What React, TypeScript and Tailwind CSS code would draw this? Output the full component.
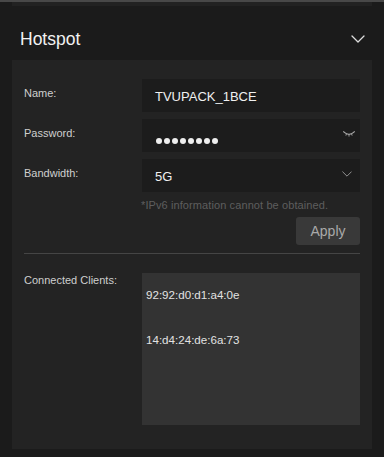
import React from 'react';

const font = { fontFamily: '"Liberation Sans", Arial, Helvetica, sans-serif' };

function Chevron({ className }: { className?: string }) {
  return (
    <svg viewBox="0 0 14 8" fill="none" className={className}>
      <path d="M1 1l6 6 6-6" stroke="currentColor" strokeWidth="1.3" strokeLinecap="round" strokeLinejoin="round" />
    </svg>
  );
}

function ClosedEye() {
  return (
    <svg viewBox="0 0 12 6" fill="none" className="h-[6px] w-[12px] text-[#a8a8a8]">
      <path d="M1 1.2Q6 5.5 11 1.2" stroke="currentColor" strokeWidth="1.1" strokeLinecap="round" />
      <path d="M1.2 1.2L0.6 0.4M3.4 3L3 4.2M6 3.9V5.2M8.6 3L9 4.2M10.8 1.2L11.4 0.4" stroke="currentColor" strokeWidth="0.9" strokeLinecap="round" />
    </svg>
  );
}

function Label({ children }: { children: React.ReactNode }) {
  return <div className="pt-[7px] text-[11px] leading-[14px] text-[#cfcfcf]">{children}</div>;
}

export default function App() {
  const clients = ['92:92:d0:d1:a4:0e', '14:d4:24:de:6a:73'];

  return (
    <div className="h-[457px] w-[384px] overflow-hidden bg-[#1b1b1b]" style={font}>
      <div className="h-[2px] bg-[#484848]" />
      <div className="mx-3 h-[4px] bg-[#222222]" />

      <div className="flex items-center justify-between pb-[11px] pl-5 pr-[19px] pt-[23px]">
        <h2 className="text-[17.5px] font-medium leading-[20px] text-[#f2f2f2]">Hotspot</h2>
        <Chevron className="h-[8px] w-[14px] text-[#dddddd]" />
      </div>

      <div className="mx-3 h-[389px] bg-[#232323] px-3 pt-[19px]">
        <div className="grid grid-cols-[118px_1fr] gap-y-[7px]">
          <Label>Name:</Label>
          <div className="flex h-[33px] items-center bg-[#1c1c1c] pl-[13px] pt-[2px] text-[13px] text-[#f0f0f0]">
            TVUPACK_1BCE
          </div>

          <Label>Password:</Label>
          <div className="flex h-[33px] items-center justify-between bg-[#1c1c1c] pl-[14px] pr-[5px]">
            <div className="mt-[10px] flex gap-[2px]">
              {Array.from({ length: 8 }).map((_, i) => (
                <span key={i} className="h-[6px] w-[6px] rounded-full bg-[#eeeeee]" />
              ))}
            </div>
            <div className="-mt-[4px]">
              <ClosedEye />
            </div>
          </div>

          <Label>Bandwidth:</Label>
          <div className="flex h-[33px] items-center justify-between bg-[#1c1c1c] pl-[13px] pr-[8px] pt-[2px] text-[13px] text-[#f0f0f0]">
            <span>5G</span>
            <Chevron className="-mt-[6px] h-[6px] w-[10px] text-[#9a9a9a]" />
          </div>
        </div>

        <div className="ml-[117px] mt-[6px] text-[11px] leading-[14px] tracking-[0.1px] text-[#5e5e5e]">
          *IPv6 information cannot be obtained.
        </div>

        <div className="mt-[5px] flex justify-end">
          <button className="h-[28px] w-[64px] rounded-[3px] bg-[#393939] text-[14px] text-[#a9a9a9]">Apply</button>
        </div>

        <div className="mt-[8px] h-px bg-[#454545]" />

        <div className="mt-[19px] grid grid-cols-[118px_1fr]">
          <div className="text-[11px] leading-[14px] text-[#cfcfcf]">Connected Clients:</div>
          <div className="flex h-[152px] flex-col gap-[29px] bg-[#333333] pl-[4px] pt-[14px] text-[11.6px] leading-[16px] text-[#e2e2e2]">
            {clients.map((c) => (
              <div key={c}>{c}</div>
            ))}
          </div>
        </div>
      </div>
    </div>
  );
}
